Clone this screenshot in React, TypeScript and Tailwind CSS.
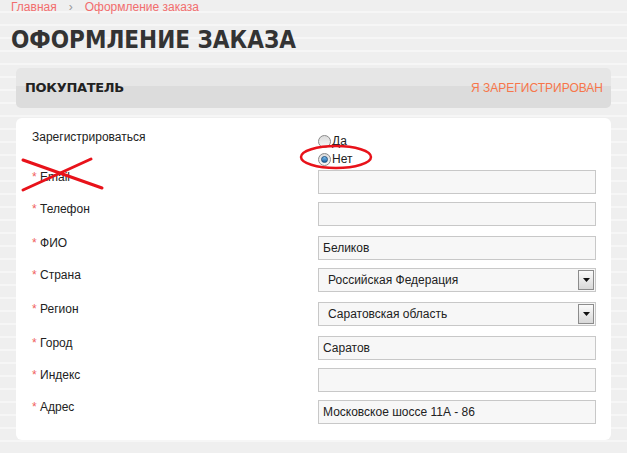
import React from "react"

const fields = [
    { label: "Email", value: "", h: "h-[32px]" },
    { label: "Телефон", value: "", h: "h-[34px]" },
    { label: "ФИО", value: "Беликов", h: "h-[32px]" },
    { label: "Страна", value: "Российская Федерация", select: true, h: "h-[34px]" },
    { label: "Регион", value: "Саратовская область", select: true, h: "h-[34px]" },
    { label: "Город", value: "Саратов", h: "h-[32px]" },
    { label: "Индекс", value: "", h: "h-[32px]" },
    { label: "Адрес", value: "Московское шоссе 11А - 86", h: "h-[32px]" },
]

function Radio({ checked }: { checked?: boolean }) {
    return (
        <span className="inline-flex h-[13px] w-[13px] items-center justify-center rounded-full border border-[#8a8a8a] bg-gradient-to-b from-[#dcdcdc] to-[#f8f8f8]">
            {checked && <span className="h-[7px] w-[7px] rounded-full bg-gradient-to-b from-[#7ac0f0] to-[#1a5f9e] border border-[#1d4f80]" />}
        </span>
    )
}

function Field({ value, select }: { value: string; select?: boolean }) {
    return (
        <div className="flex h-[24px] w-[278px] items-center border border-[#c8c8c8] bg-[#f7f7f7] text-[12px] text-[#222]">
            <span className={select ? "flex-1 pl-[9px]" : "flex-1 pl-[4px]"}>{value}</span>
            {select && (
                <span className="mr-[1px] flex h-[20px] w-[16px] items-center justify-center border border-[#8c8c8c] bg-gradient-to-b from-[#fbfbfb] to-[#d8d8d8]">
                    <svg width="7" height="4" viewBox="0 0 7 4"><path d="M0 0h7L3.5 4z" fill="#111" /></svg>
                </span>
            )}
        </div>
    )
}

export default function App() {
    return (
        <div className="relative h-[453px] w-[627px] overflow-hidden bg-[#efefef] bg-[repeating-linear-gradient(0deg,#efefef_0px,#efefef_11px,#f6f6f6_11px,#f6f6f6_13px)] font-['Liberation_Sans',Arial,sans-serif]">
            {/* breadcrumbs */}
            <div className="flex items-center gap-[12px] pl-[11px] text-[12px] leading-[14px] text-[#f26d6d]">
                <span>Главная</span>
                <span className="text-[#999]">›</span>
                <span>Оформление заказа</span>
            </div>

            <h1 className="mt-[12px] pl-[11px] font-['DejaVu_Sans_Condensed','DejaVu_Sans',Verdana,sans-serif] text-[24px] font-bold leading-[28px] text-[#333]">
                ОФОРМЛЕНИЕ ЗАКАЗА
            </h1>

            {/* section header */}
            <div className="mx-[16px] mt-[14px] flex h-[40px] items-center justify-between rounded-[5px] bg-[linear-gradient(#e6e6e6_0%,#e6e6e6_45%,#dcdcdc_45%,#dcdcdc_100%)] pl-[9px] pr-[8px]">
                <span className="font-['DejaVu_Sans',Verdana,sans-serif] text-[13px] font-bold tracking-[-0.3px] text-[#222]">ПОКУПАТЕЛЬ</span>
                <span className="text-[12px] text-[#f7764a]">Я ЗАРЕГИСТРИРОВАН</span>
            </div>

            {/* form card */}
            <div className="mx-[16px] mt-[10px] h-[322px] rounded-[6px] bg-white pl-[16px] pt-[12px] text-[12px] leading-[14px] text-[#222]">
                <div className="flex">
                    <div className="w-[286px]">Зарегистрироваться</div>
                    <div className="flex flex-col gap-[5px] pt-[5px]">
                        <label className="flex items-center gap-[1px] leading-[13px]"><Radio />Да</label>
                        <label className="flex items-center gap-[1px] leading-[13px]"><Radio checked />Нет</label>
                    </div>
                </div>
                <div className="mt-[4px] flex flex-col">
                    {fields.map((f) => (
                        <div key={f.label} className={"flex " + f.h}>
                            <div className="w-[286px]">
                                <span className="text-[#f06060]">*</span> {f.label}
                            </div>
                            <Field value={f.value} select={f.select} />
                        </div>
                    ))}
                </div>
            </div>

            {/* hand-drawn annotations */}
            <svg className="pointer-events-none absolute left-0 top-0" width="627" height="453">
                <line x1="23" y1="160" x2="102" y2="188" stroke="#e8121a" strokeWidth="3" strokeLinecap="round" />
                <line x1="23" y1="190" x2="91" y2="159" stroke="#e8121a" strokeWidth="3" strokeLinecap="round" />
                <ellipse cx="336" cy="157" rx="35" ry="11" fill="none" stroke="#e8121a" strokeWidth="2.5" />
            </svg>
        </div>
    )
}
